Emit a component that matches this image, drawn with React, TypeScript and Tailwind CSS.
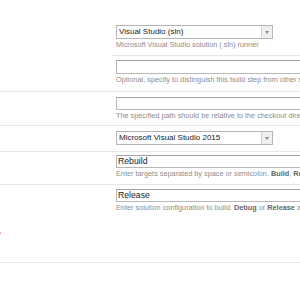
import React from "react";

const font = { fontFamily: '"Liberation Sans", Arial, sans-serif' };

function Select({ value }: { value: string }) {
  return (
    <div className="flex w-[157px] h-[14px] border border-[#b5b5b5] bg-white">
      <div className="flex-1 pl-[2px] text-[8px] leading-[12px] text-[#222] whitespace-nowrap overflow-hidden">{value}</div>
      <div className="w-[11px] h-full border-l border-[#d0d0d0] bg-[#efefef] flex items-center justify-center">
        <div className="w-0 h-0 border-l-[2.5px] border-r-[2.5px] border-t-[3px] border-l-transparent border-r-transparent border-t-[#8a8a8a]" />
      </div>
    </div>
  );
}

function Input({ value, h }: { value?: string; h: string }) {
  return (
    <div className={`w-[300px] ${h} border border-[#b8b8b8] border-t-[#a0a0a0] bg-white pl-[1px] text-[8.7px] leading-[11px] text-[#222] whitespace-nowrap`}>
      {value}
    </div>
  );
}

function Hint({ children }: { children: React.ReactNode }) {
  return (
    <div className="mt-[1px] h-[9px] text-[7.3px] leading-[9px] text-[#8c8c8c] whitespace-nowrap">{children}</div>
  );
}

export default function App() {
  return (
    <div className="w-[300px] h-[300px] overflow-hidden bg-white pt-[20px]" style={font}>
      {/* Row 1 */}
      <div className="flex">
        <div className="w-[112px] shrink-0" />
        <div className="flex-1 pl-[4px] pt-[5px] pb-[6px] border-b border-[#e6e6e6]">
          <Select value="Visual Studio (sln)" />
          <Hint>Microsoft Visual Studio solution (.sln) runner</Hint>
        </div>
      </div>
      {/* Row 2 */}
      <div className="flex border-b border-[#e6e6e6]">
        <div className="w-[112px] shrink-0" />
        <div className="flex-1 pl-[4px] pt-[4px] pb-[7px]">
          <Input h="h-[14px]" />
          <Hint>Optional, specify to distinguish this build step from other steps.</Hint>
        </div>
      </div>
      {/* Row 3 */}
      <div className="flex border-b border-[#e6e6e6]">
        <div className="w-[112px] shrink-0" />
        <div className="flex-1 pl-[4px] pt-[5px] pb-[5px]">
          <Input h="h-[13px]" />
          <Hint>The specified path should be relative to the checkout directory.</Hint>
        </div>
      </div>
      {/* Row 4 */}
      <div className="flex border-b border-[#e6e6e6]">
        <div className="w-[112px] shrink-0" />
        <div className="flex-1 pl-[4px] pt-[5px] pb-[6px]">
          <Select value="Microsoft Visual Studio 2015" />
        </div>
      </div>
      {/* Row 5 */}
      <div className="flex border-b border-[#e6e6e6]">
        <div className="w-[112px] shrink-0" />
        <div className="flex-1 pl-[4px] pt-[3px] pb-[6px]">
          <Input h="h-[13px]" value="Rebuild" />
          <Hint>
            Enter targets separated by space or semicolon. <b className="text-[#666]">Build</b>, <b className="text-[#666]">Rebuild</b>, <b className="text-[#666]">Clean</b>
          </Hint>
        </div>
      </div>
      {/* Row 6 */}
      <div className="flex border-b border-[#e6e6e6]">
        <div className="w-[112px] shrink-0 relative">
          <div className="absolute left-0 top-[47px] w-[1px] h-[2px] bg-[#f2aaaa]" />
        </div>
        <div className="flex-1 pl-[4px] pt-[4px] pb-[50px]">
          <Input h="h-[13px]" value="Release" />
          <Hint>
            Enter solution configuration to build. <b className="text-[#666]">Debug</b> or <b className="text-[#666]">Release</b> are default values.
          </Hint>
        </div>
      </div>
    </div>
  );
}
